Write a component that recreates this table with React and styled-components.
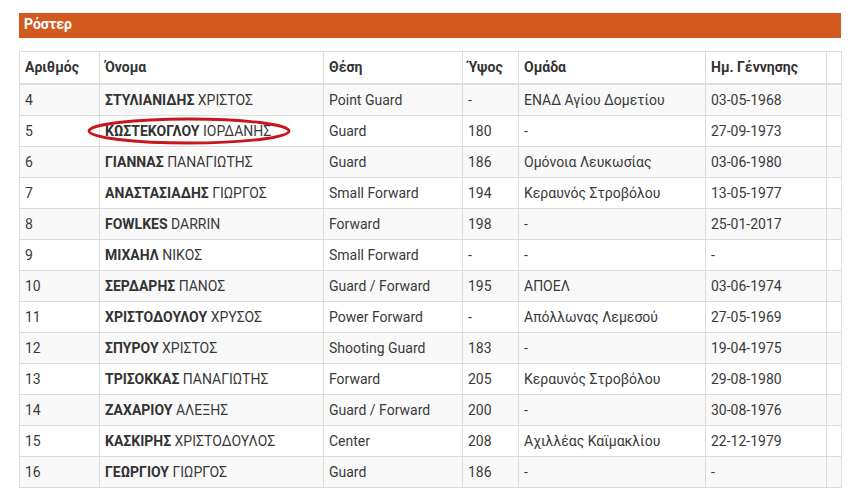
import React from 'react';
import styled, { createGlobalStyle } from 'styled-components';

const GlobalStyle = createGlobalStyle`
  body {
    margin: 0;
    background: #fff;
    font-family: Roboto, "Noto Sans", sans-serif;
    color: #333;
  }
`;

const players = [
  ['4', 'ΣΤΥΛΙΑΝΙΔΗΣ', 'ΧΡΙΣΤΟΣ', 'Point Guard', '-', 'ΕΝΑΔ Αγίου Δομετίου', '03-05-1968'],
  ['5', 'ΚΩΣΤΕΚΟΓΛΟΥ', 'ΙΟΡΔΑΝΗΣ', 'Guard', '180', '-', '27-09-1973', true],
  ['6', 'ΓΙΑΝΝΑΣ', 'ΠΑΝΑΓΙΩΤΗΣ', 'Guard', '186', 'Ομόνοια Λευκωσίας', '03-06-1980'],
  ['7', 'ΑΝΑΣΤΑΣΙΑΔΗΣ', 'ΓΙΩΡΓΟΣ', 'Small Forward', '194', 'Κεραυνός Στροβόλου', '13-05-1977'],
  ['8', 'FOWLKES', 'DARRIN', 'Forward', '198', '-', '25-01-2017'],
  ['9', 'ΜΙΧΑΗΛ', 'ΝΙΚΟΣ', 'Small Forward', '-', '-', '-'],
  ['10', 'ΣΕΡΔΑΡΗΣ', 'ΠΑΝΟΣ', 'Guard / Forward', '195', 'ΑΠΟΕΛ', '03-06-1974'],
  ['11', 'ΧΡΙΣΤΟΔΟΥΛΟΥ', 'ΧΡΥΣΟΣ', 'Power Forward', '-', 'Απόλλωνας Λεμεσού', '27-05-1969'],
  ['12', 'ΣΠΥΡΟΥ', 'ΧΡΙΣΤΟΣ', 'Shooting Guard', '183', '-', '19-04-1975'],
  ['13', 'ΤΡΙΣΟΚΚΑΣ', 'ΠΑΝΑΓΙΩΤΗΣ', 'Forward', '205', 'Κεραυνός Στροβόλου', '29-08-1980'],
  ['14', 'ΖΑΧΑΡΙΟΥ', 'ΑΛΕΞΗΣ', 'Guard / Forward', '200', '-', '30-08-1976'],
  ['15', 'ΚΑΣΚΙΡΗΣ', 'ΧΡΙΣΤΟΔΟΥΛΟΣ', 'Center', '208', 'Αχιλλέας Καϊμακλίου', '22-12-1979'],
  ['16', 'ΓΕΩΡΓΙΟΥ', 'ΓΙΩΡΓΟΣ', 'Guard', '186', '-', '-'],
];

const columns = [
  ['Αριθμός', 80],
  ['Όνομα', 224],
  ['Θέση', 139],
  ['Ύψος', 56],
  ['Ομάδα', 187],
  ['Ημ. Γέννησης', 121],
  ['', 15],
];

function Highlight() {
  return (
    <Ellipse viewBox="0 0 204 28" width="204" height="28">
      <ellipse cx="102" cy="14" rx="100" ry="12" fill="none" stroke="#c8161d" strokeWidth="2.8" />
    </Ellipse>
  );
}

export default function App() {
  return (
    <Page>
      <GlobalStyle />
      <SectionBar>Ρόστερ</SectionBar>
      <Roster>
        <colgroup>
          {columns.map(([label, w], i) => (
            <col key={i} style={{ width: w }} />
          ))}
        </colgroup>
        <thead>
          <tr>
            {columns.map(([label], i) => (
              <HeadCell key={i}>{label}</HeadCell>
            ))}
          </tr>
        </thead>
        <tbody>
          {players.map(([num, last, first, pos, height, team, born, marked]) => (
            <Row key={num}>
              <Cell>{num}</Cell>
              <Cell>
                <NameWrap>
                  <strong>{last}</strong> {first}
                  {marked && <Highlight />}
                </NameWrap>
              </Cell>
              <Cell>{pos}</Cell>
              <Cell>{height}</Cell>
              <Cell>{team}</Cell>
              <Cell>{born}</Cell>
              <Cell />
            </Row>
          ))}
        </tbody>
      </Roster>
    </Page>
  );
}

const Page = styled.div`
  padding: 13px 19px 0 19px;
  width: 822px;
`;

const SectionBar = styled.div`
  background: #d35a1f;
  color: #fff;
  font-weight: 700;
  font-size: 14px;
  height: 25px;
  line-height: 23px;
  padding: 0 5px;
  box-sizing: border-box;
  margin-bottom: 13px;
`;

const Roster = styled.table`
  width: 822px;
  table-layout: fixed;
  border-collapse: collapse;
  font-size: 14px;
  line-height: 20px;
`;

const HeadCell = styled.th`
  text-align: left;
  font-weight: 700;
  padding: 5px 5px 6px;
  border: 1px solid #ddd;
  border-bottom: 2px solid #ddd;
  color: #333;
  white-space: nowrap;
  overflow: hidden;
`;

const Row = styled.tr`
  &:nth-child(odd) {
    background: #f9f9f9;
  }
`;

const Cell = styled.td`
  padding: 5px 5px;
  border: 1px solid #ddd;
  white-space: nowrap;
  overflow: visible;
  color: #3a3a3a;
  strong {
    font-weight: 700;
    color: #333;
  }
`;

const NameWrap = styled.span`
  position: relative;
  display: inline-block;
`;

const Ellipse = styled.svg`
  position: absolute;
  left: -18px;
  top: -4px;
  pointer-events: none;
`;
